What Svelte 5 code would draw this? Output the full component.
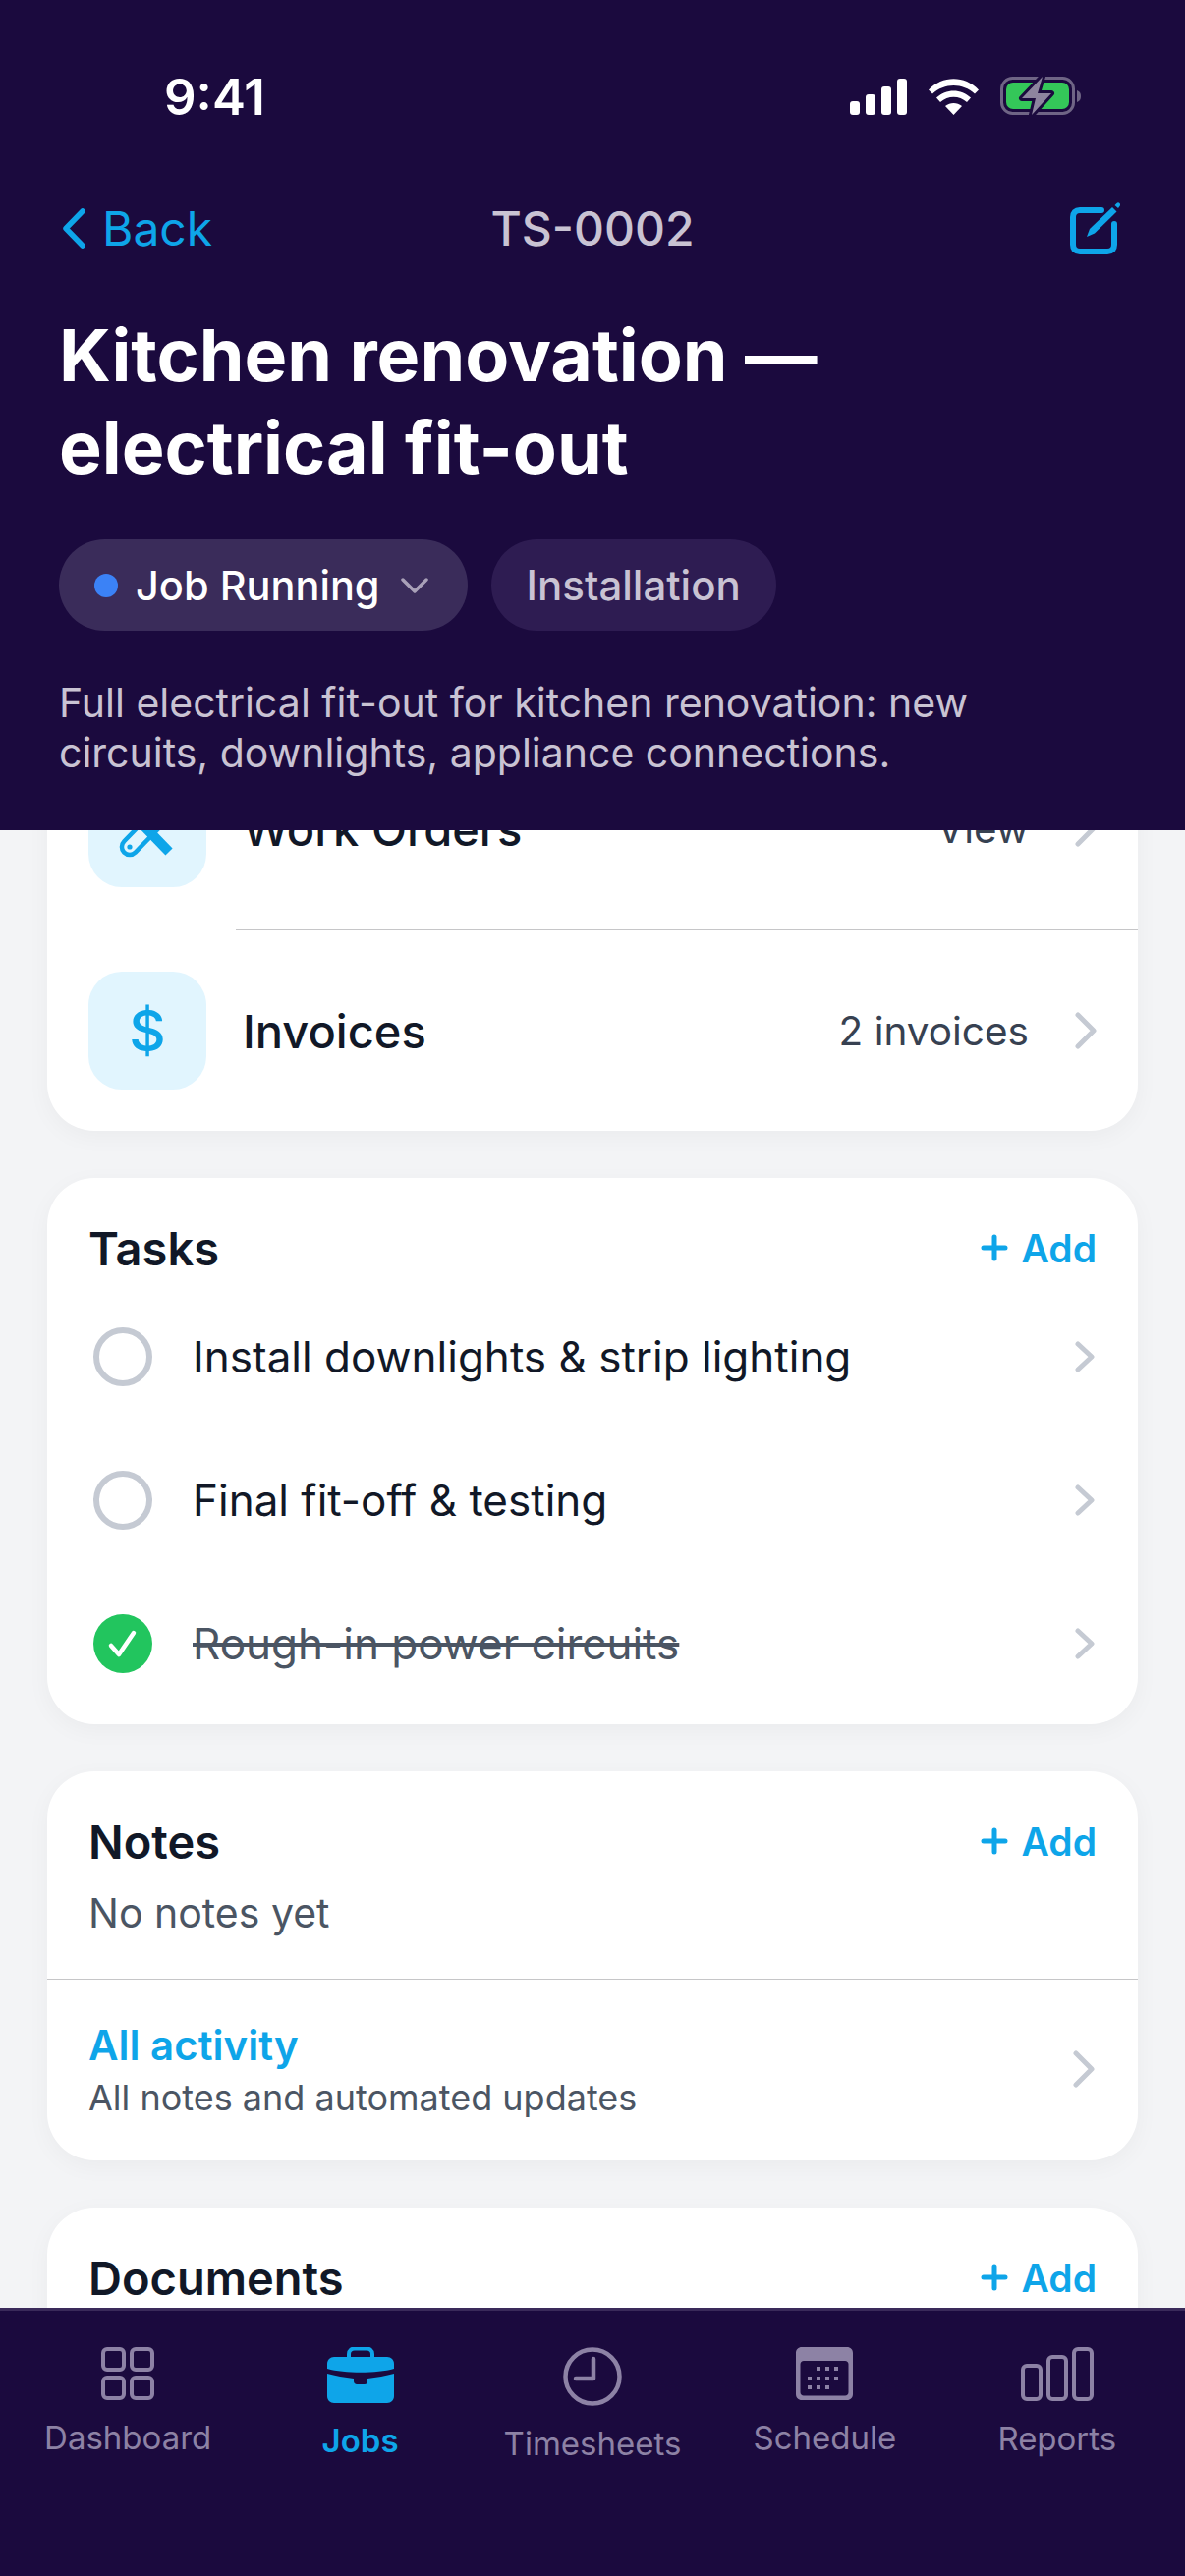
<script>
  const tasks = [
    { title: 'Install downlights & strip lighting', done: false },
    { title: 'Final fit-off & testing', done: false },
    { title: 'Rough-in power circuits', done: true },
  ];
</script>

{#snippet addButton()}
  <span class="add">
    <svg width="28" height="28" viewBox="0 0 28 28" stroke="#0ea5e9" stroke-width="5" stroke-linecap="round">
      <path d="M14 3V25M3 14H25" />
    </svg>
    Add
  </span>
{/snippet}

<div class="screen">
  <header class="top">
    <div class="status">
      <span class="time">9:41</span>
      <div class="status-icons">
        <svg width="58" height="37" viewBox="0 0 58 37" fill="#fff">
          <rect x="0" y="23" width="10" height="14" rx="3" />
          <rect x="16" y="16" width="10" height="21" rx="3" />
          <rect x="32" y="8" width="10" height="29" rx="3" />
          <rect x="48" y="0" width="10" height="37" rx="3" />
        </svg>
        <svg width="51" height="37" viewBox="0 0 51 37" fill="#fff">
          <path d="M0 11.5C14-3.5 37-3.5 51 11.5L47 15.5C35 4 16 4 4 15.5Z" />
          <path d="M8 19.5C18 10 33 10 43 19.5L39 24C31 17 20 17 12 24Z" />
          <path d="M17 28C22 24 29 24 34 28L25.5 37Z" />
        </svg>
        <svg width="82" height="40" viewBox="0 0 82 40">
          <rect x="1.5" y="1.5" width="73" height="36" rx="11" fill="none" stroke="#6f6585" stroke-width="3" />
          <path d="M78 14C81 15 82 17 82 20C82 23 81 25 78 26Z" fill="#6f6585" />
          <rect x="6" y="6" width="64" height="27" rx="7" fill="#34c759" />
          <path d="M43 0L22 22H36L32 39L52 17H38Z" fill="#8d849f" stroke="#1b0a3e" stroke-width="6" stroke-linejoin="round" paint-order="stroke" />
        </svg>
      </div>
    </div>

    <nav class="nav">
      <span class="back">
        <svg width="24" height="41" viewBox="0 0 24 41" fill="none" stroke="#0ea5e9" stroke-width="5.5" stroke-linecap="round" stroke-linejoin="round">
          <path d="M21 3L4 20.5L21 38" />
        </svg>
        Back
      </span>
      <span class="code">TS-0002</span>
      <svg class="edit" width="51" height="53" viewBox="0 0 51 53" fill="none">
        <path d="M32 8H10C5.500 8 3 10.500 3 15V43C3 47.500 5.500 50 10 50H38C42.500 50 45 47.500 45 43V22" stroke="#0ea5e9" stroke-width="6" stroke-linecap="round" />
        <path d="M17 35L20 27L43 5L47.500 9.500L25 31.500Z" fill="#0ea5e9" />
        <path d="M45.500 3L47.500 1C48.500 0 49.500 0 50.500 1C51.300 2 51.300 3 50.500 4L49 6Z" fill="#0ea5e9" />
      </svg>
    </nav>

    <h1>Kitchen renovation —<br />electrical fit-out</h1>

    <div class="pills">
      <span class="pill status-pill">
        <i class="dot"></i>
        Job Running
        <svg width="28" height="16" viewBox="0 0 28 16" fill="none" stroke="#a9a1b8" stroke-width="3.500" stroke-linecap="round" stroke-linejoin="round">
          <path d="M2 2L14 14L26 2" />
        </svg>
      </span>
      <span class="pill type-pill">Installation</span>
    </div>

    <p class="desc">Full electrical fit-out for kitchen renovation: new circuits, downlights, appliance connections.</p>
  </header>

  <main class="scroll">
    <div class="scroll-inner">
      <section class="card links">
        <div class="link-row">
          <div class="link-icon">
            <svg width="60" height="60" viewBox="0 0 60 60" fill="none">
              <path d="M34.300 14.300L6.300 43.300A8 8 0 0 0 17.700 54.700L45.700 25.700" stroke="#0ea5e9" stroke-width="4.500" />
              <circle cx="12" cy="49" r="2.600" fill="#0ea5e9" />
              <path d="M22 23L52 54" stroke="#0ea5e9" stroke-width="10" stroke-linejoin="round" />
            </svg>
          </div>
          <span class="link-title">Work Orders</span>
          <span class="link-meta">View</span>
          <svg class="chev" width="22" height="38" viewBox="0 0 22 38"><path d="M3 3L19 19L3 35" /></svg>
        </div>
        <div class="rule inset"></div>
        <div class="link-row">
          <div class="link-icon dollar">$</div>
          <span class="link-title">Invoices</span>
          <span class="link-meta">2 invoices</span>
          <svg class="chev" width="22" height="38" viewBox="0 0 22 38"><path d="M3 3L19 19L3 35" /></svg>
        </div>
      </section>

      <section class="card tasks">
        <div class="card-head">
          <h2>Tasks</h2>
          {@render addButton()}
        </div>
        {#each tasks as task}
          <div class="task">
            {#if task.done}
              <svg class="check" width="60" height="60" viewBox="0 0 60 60">
                <circle cx="30" cy="30" r="30" fill="#22c55e" />
                <path d="M18 32L26 41L41 19" fill="none" stroke="#fff" stroke-width="4.500" stroke-linecap="round" stroke-linejoin="round" />
              </svg>
            {:else}
              <span class="ring"></span>
            {/if}
            <span class="task-title" class:done={task.done}>{task.title}</span>
            <svg class="chev small" width="20" height="32" viewBox="0 0 20 32"><path d="M3 3L17 16L3 29" /></svg>
          </div>
        {/each}
      </section>

      <section class="card notes">
        <div class="card-head">
          <h2>Notes</h2>
          {@render addButton()}
        </div>
        <p class="empty">No notes yet</p>
        <div class="rule"></div>
        <div class="activity">
          <div>
            <div class="activity-title">All activity</div>
            <div class="activity-sub">All notes and automated updates</div>
          </div>
          <svg class="chev" width="22" height="38" viewBox="0 0 22 38"><path d="M3 3L19 19L3 35" /></svg>
        </div>
      </section>

      <section class="card docs">
        <div class="card-head">
          <h2>Documents</h2>
          {@render addButton()}
        </div>
      </section>
    </div>
  </main>

  <footer class="tabs">
    <div class="tab">
      <svg width="54" height="54" viewBox="0 0 54 54" fill="none" stroke="#8d82a5" stroke-width="4">
        <rect x="2" y="2" width="21" height="21" rx="4" />
        <rect x="31" y="2" width="21" height="21" rx="4" />
        <rect x="2" y="31" width="21" height="21" rx="4" />
        <rect x="31" y="31" width="21" height="21" rx="4" />
      </svg>
      <span>Dashboard</span>
    </div>
    <div class="tab active">
      <svg width="68" height="57" viewBox="0 0 68 57" fill="#0ea5e9">
        <path d="M22 11V7C22 3 25 1.500 28 1.500H40C43 1.500 46 3 46 7V11" fill="none" stroke="#0ea5e9" stroke-width="4" />
        <path d="M7 10H61C65 10 68 13 68 17V22C50 27 18 27 0 22V17C0 13 3 10 7 10Z" />
        <path d="M0 27C8 29 18 31 27 32V35C27 37 29 38 30 38H38C40 38 41 37 41 35V32C50 31 60 29 68 27V50C68 54 65 57 61 57H7C3 57 0 54 0 50Z" />
      </svg>
      <span>Jobs</span>
    </div>
    <div class="tab">
      <svg width="60" height="60" viewBox="0 0 60 60" fill="none" stroke="#8d82a5" stroke-width="4.500">
        <circle cx="30" cy="30" r="27.500" />
        <path d="M31 12V32H13" stroke-linecap="round" stroke-linejoin="round" />
      </svg>
      <span>Timesheets</span>
    </div>
    <div class="tab">
      <svg width="58" height="54" viewBox="0 0 58 54">
        <path fill-rule="evenodd" fill="#8d82a5" d="M6 0H52C55.500 0 58 2.500 58 6V48C58 51.500 55.500 54 52 54H6C2.500 54 0 51.500 0 48V6C0 2.500 2.500 0 6 0ZM8 14C6 14 4.500 15.500 4.500 17.500V46C4.500 48 6 49.500 8 49.500H50C52 49.500 53.500 48 53.500 46V17.500C53.500 15.500 52 14 50 14Z" />
        <g fill="#8d82a5">
          <rect x="21" y="20" width="4" height="4" /><rect x="30" y="20" width="4" height="4" /><rect x="39" y="20" width="4" height="4" />
          <rect x="12" y="30" width="4" height="4" /><rect x="21" y="30" width="4" height="4" /><rect x="30" y="30" width="4" height="4" /><rect x="39" y="30" width="4" height="4" />
          <rect x="12" y="39" width="4" height="4" /><rect x="21" y="39" width="4" height="4" /><rect x="30" y="39" width="4" height="4" />
        </g>
      </svg>
      <span>Schedule</span>
    </div>
    <div class="tab">
      <svg width="74" height="55" viewBox="0 0 74 55" fill="none" stroke="#8d82a5" stroke-width="4">
        <rect x="2" y="19" width="18" height="34" rx="4" />
        <rect x="28" y="10" width="18" height="43" rx="4" />
        <rect x="54" y="2" width="18" height="51" rx="4" />
      </svg>
      <span>Reports</span>
    </div>
  </footer>
</div>

<style>
  :global(body) {
    margin: 0;
    background: #f3f4f6;
  }

  .screen {
    width: 1206px;
    height: 2622px;
    display: flex;
    flex-direction: column;
    overflow: hidden;
    font-family: Inter, "Noto Sans", sans-serif;
  }

  .top {
    height: 845px;
    box-sizing: border-box;
    background: #1b0a3e;
    padding: 0 60px;
    flex-shrink: 0;
    position: relative;
    z-index: 1;
  }

  .status {
    display: flex;
    justify-content: space-between;
    align-items: center;
    height: 40px;
    padding: 78px 0 0 107px;
    margin-right: 46px;
  }

  .time {
    color: #fff;
    font-size: 51px;
    font-weight: 600;
  }

  .status-icons {
    display: flex;
    align-items: center;
    gap: 22px;
  }

  .nav {
    display: flex;
    justify-content: space-between;
    align-items: center;
    height: 54px;
    margin-top: 87px;
    position: relative;
  }

  .back {
    display: flex;
    align-items: center;
    gap: 17px;
    color: #0ea5e9;
    font-size: 48px;
    margin-left: 3px;
  }

  .code {
    position: absolute;
    left: 0;
    right: 0;
    text-align: center;
    color: #c9c3d3;
    font-size: 48px;
    font-weight: 500;
  }

  .edit {
    margin-right: 6px;
    position: relative;
  }

  h1 {
    margin: 56px 0 0;
    color: #fff;
    font-size: 73.5px;
    font-weight: 700;
    line-height: 94px;
  }

  .pills {
    display: flex;
    gap: 24px;
    margin-top: 46px;
  }

  .pill {
    display: flex;
    align-items: center;
    height: 93px;
    border-radius: 47px;
    font-size: 41.5px;
    font-weight: 500;
    color: #fff;
  }

  .status-pill {
    padding: 0 40px 0 36px;
    background: #3a2c5a;
  }

  .dot {
    width: 24px;
    height: 24px;
    border-radius: 50%;
    background: #3b82f6;
    margin-right: 18px;
  }

  .status-pill svg {
    margin-left: 21px;
  }

  .type-pill {
    padding: 0 36px;
    background: #2e1c52;
    color: #c9c3d3;
    font-size: 42px;
  }

  .desc {
    margin: 48px 0 0;
    color: #c9c3d3;
    font-size: 41px;
    line-height: 51px;
    max-width: 1000px;
  }

  .scroll {
    flex: 1;
    overflow: hidden;
    min-height: 0;
  }

  /* content is scrolled up under the header */
  .scroll-inner {
    margin-top: -104px;
    padding: 0 48px;
    display: flex;
    flex-direction: column;
    gap: 48px;
  }

  .card {
    background: #fff;
    border-radius: 48px;
    box-shadow: 0 6px 24px rgba(0, 0, 0, 0.04);
  }

  .link-row {
    display: flex;
    align-items: center;
    height: 204px;
    padding: 0 42px;
  }

  .link-icon {
    width: 120px;
    height: 120px;
    border-radius: 34px;
    background: #e1f5fe;
    display: flex;
    align-items: center;
    justify-content: center;
    color: #0ea5e9;
    margin-right: 37px;
    flex-shrink: 0;
  }

  .dollar {
    font-size: 58px;
    font-weight: 500;
  }

  .link-title {
    flex: 1;
    font-size: 47px;
    font-weight: 500;
    color: #111827;
  }

  .link-meta {
    font-size: 40.5px;
    color: #374151;
    margin-right: 47px;
  }

  .chev {
    flex-shrink: 0;
    fill: none;
    stroke: #c5cad3;
    stroke-width: 5;
    stroke-linecap: round;
    stroke-linejoin: round;
  }

  .rule {
    height: 1px;
    background: #c6c6c8;
  }

  .rule.inset {
    margin: 1px 0 0 192px;
  }

  .card-head {
    display: flex;
    justify-content: space-between;
    align-items: center;
    height: 60px;
    padding: 41px 42px 0;
  }

  .tasks .card-head {
    margin-bottom: 8px;
  }

  h2 {
    margin: 0;
    font-size: 47px;
    font-weight: 600;
    color: #111827;
  }

  .add {
    display: flex;
    align-items: center;
    gap: 14px;
    color: #0ea5e9;
    font-size: 39px;
    font-weight: 600;
  }

  .tasks {
    height: 556px;
    box-sizing: border-box;
  }

  .task {
    display: flex;
    align-items: center;
    height: 146px;
    padding: 0 44px 0 47px;
  }

  .ring {
    width: 60px;
    height: 60px;
    box-sizing: border-box;
    border: 6px solid #c5cad3;
    border-radius: 50%;
  }

  .task-title {
    flex: 1;
    margin-left: 41px;
    font-size: 44px;
    color: #111827;
  }

  .task-title.done {
    color: #4b5563;
    text-decoration: line-through;
  }

  .empty {
    margin: 14px 42px 0;
    font-size: 41px;
    line-height: 58px;
    color: #4b5563;
    height: 96px;
  }

  .activity {
    display: flex;
    justify-content: space-between;
    align-items: center;
    padding: 37px 44px 40px 42px;
  }

  .activity-title {
    color: #0ea5e9;
    font-size: 42px;
    font-weight: 600;
    line-height: 59px;
  }

  .activity-sub {
    color: #4b5563;
    font-size: 36px;
    line-height: 48px;
  }

  .docs {
    height: 300px;
  }

  .tabs {
    height: 273px;
    box-sizing: border-box;
    background: #1b0a3e;
    border-top: 3px solid #3a2a5a;
    display: grid;
    grid-template-columns: repeat(5, 1fr);
    padding: 37px 12px 0;
    flex-shrink: 0;
    position: relative;
  }

  .tab {
    display: flex;
    flex-direction: column;
    align-items: center;
    color: #8d82a5;
    font-size: 33px;
  }

  .tab span {
    margin-top: 17px;
    line-height: 42px;
  }

  .tab.active {
    color: #0ea5e9;
    font-weight: 600;
  }
</style>
